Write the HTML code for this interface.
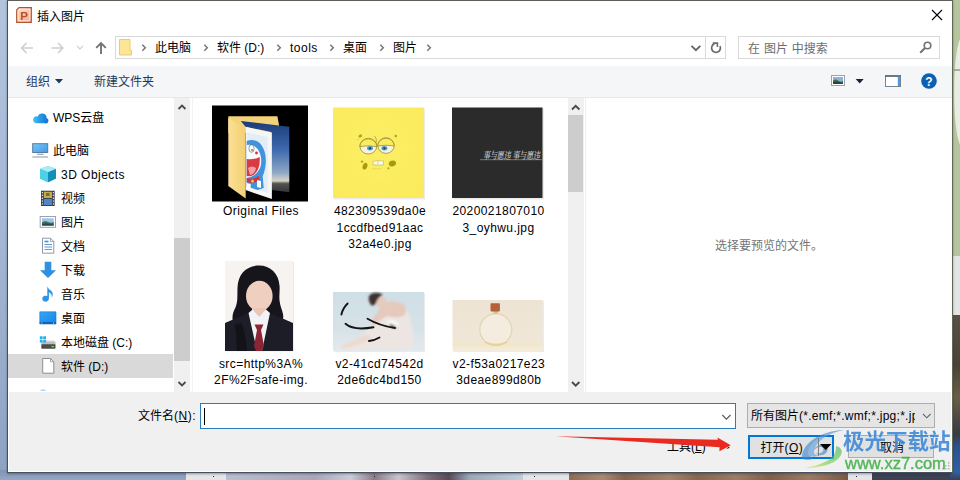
<!DOCTYPE html>
<html lang="zh-CN">
<head>
<meta charset="utf-8">
<title>插入图片</title>
<style>
*{box-sizing:border-box;margin:0;padding:0}
html,body{width:960px;height:480px;overflow:hidden}
body{position:relative;font-family:"Liberation Sans","Noto Sans CJK SC",sans-serif;font-size:12px;color:#000;background:#9fb2cf}
.abs{position:absolute}
#bgL{left:0;top:0;width:8px;height:480px;background:linear-gradient(#b3c4dd,#a3b6d3 50%,#8da2c2)}
#dlg{left:7px;top:0;width:946px;height:473px;background:#fff;border:1px solid #46505c;border-top-color:#5c6058;border-right-color:#5f6a55;box-shadow:0 1px 2px rgba(40,50,70,.45)}
#title{left:37px;top:8px;font-size:12px;line-height:16px}
#addr{left:115px;top:36px;width:591px;height:23px;border:1px solid #d9d9d9;background:#fff}
#refresh{left:705px;top:36px;width:21px;height:23px;border:1px solid #d9d9d9;background:#fff}
#search{left:738px;top:36px;width:202px;height:23px;border:1px solid #d9d9d9;background:#fff}
#tool{left:8px;top:66px;width:944px;height:32px;background:#f5f6f7;border-bottom:1px solid #e6e7e8}
.t{position:absolute;white-space:nowrap;line-height:16px;margin-top:1px}
.nav .t{font-size:12px;margin-top:1.500px}
#sel{left:8px;top:354px;width:165px;height:24px;background:#d9d9d9}
.sb{background:#f0f0f0}
.thumbbar{background:#cdcdcd}
#bottom{left:8px;top:392px;width:944px;height:80px;background:#f0f0f0;border:1px solid #fff;border-top:0}
#fname{left:200px;top:403px;width:535.500px;height:25.500px;border:1px solid #2a7dbd;background:#fff}
#filter{left:747px;top:403px;width:188px;height:25px;border:1px solid #adadad;background:#e5e5e5}
.btn{border:1px solid #adadad;background:#e1e1e1}
.cap{position:absolute;text-align:center;font-size:12px;line-height:16.7px;white-space:nowrap;letter-spacing:.42px}
</style>
</head>
<body>
<div id="bgL" class="abs"></div>
<svg class="abs" style="left:0;top:0" width="960" height="480" viewBox="0 0 960 480">
 <defs>
  <linearGradient id="bgb" x1="0" y1="0" x2="0" y2="1"><stop offset="0" stop-color="#7f93b4"/><stop offset="1" stop-color="#93a6c4"/></linearGradient>
  <linearGradient id="brn" x1="0" y1="0" x2="1" y2="0"><stop offset="0" stop-color="#8c6c56"/><stop offset=".12" stop-color="#a88a72"/><stop offset=".2" stop-color="#84644e"/><stop offset=".36" stop-color="#a3846c"/><stop offset=".46" stop-color="#86664f"/><stop offset=".6" stop-color="#9c7c64"/><stop offset=".72" stop-color="#7f5f4a"/><stop offset=".86" stop-color="#9a7a62"/><stop offset="1" stop-color="#7a5a46"/></linearGradient>
  <linearGradient id="mid1" x1="0" y1="0" x2="1" y2="0"><stop offset="0" stop-color="#b9bfd0"/><stop offset=".3" stop-color="#a9a6b8"/><stop offset=".42" stop-color="#c9cdd8"/><stop offset=".5" stop-color="#8a7c88"/><stop offset=".58" stop-color="#c8c4cc"/><stop offset=".68" stop-color="#7d6f7a"/><stop offset=".75" stop-color="#5a4a55"/><stop offset=".82" stop-color="#9aa8b8"/><stop offset="1" stop-color="#c3cedb"/></linearGradient>
  <linearGradient id="rdk" x1="0" y1="0" x2="0" y2="1"><stop offset="0" stop-color="#5a5048"/><stop offset=".3" stop-color="#4a4238"/><stop offset=".5" stop-color="#6a5c48"/><stop offset=".72" stop-color="#3a3a40"/><stop offset=".8" stop-color="#2a5290"/><stop offset=".95" stop-color="#2f5fa8"/><stop offset="1" stop-color="#3a4050"/></linearGradient>
 </defs>
 <rect x="0" y="470" width="186" height="10" fill="url(#bgb)"/>
 <rect x="186" y="470" width="40" height="10" fill="#e4e5e7"/>
 <rect x="226" y="470" width="297" height="10" fill="url(#mid1)"/>
 <rect x="523" y="470" width="46" height="10" fill="#e4e5e7"/>
 <rect x="569" y="470" width="279" height="10" fill="url(#brn)"/>
 <rect x="848" y="470" width="24" height="10" fill="#e4e5e7"/>
 <rect x="872" y="470" width="88" height="10" fill="#3c4252"/>
 <rect x="213" y="476" width="1" height="1" fill="#222"/><rect x="374" y="476" width="1" height="1" fill="#222"/><rect x="534" y="476" width="1" height="1" fill="#222"/><rect x="856" y="476" width="1" height="1" fill="#222"/>
 <rect x="950" y="0" width="10" height="258" fill="#b6c59d"/>
 <ellipse cx="963" cy="92" rx="9" ry="56" fill="#e9ece2"/>
 <path d="M954 70h6" stroke="#6a7060" stroke-width="1"/>
 <rect x="950" y="256" width="10" height="60" fill="#e3e4e4"/>
 <rect x="950" y="315" width="10" height="165" fill="url(#rdk)"/>
</svg>
<div id="dlg" class="abs"></div>

<!-- title bar -->
<svg class="abs" style="left:16px;top:7px" width="16" height="16" viewBox="0 0 16 16">
 <defs><linearGradient id="pp" x1="0" y1="0" x2="1" y2="1"><stop offset="0" stop-color="#fbe3d6"/><stop offset="1" stop-color="#f2a88c"/></linearGradient></defs>
 <path d="M3 .7h12.300v14.600H.7V3z" fill="url(#pp)" stroke="#b5532c" stroke-width="1.200"/>
 <path d="M3 2.200h10.800v11.600H2.200V3z" fill="none" stroke="#fdf1ea" stroke-width=".8"/>
 <text x="4.200" y="12.600" font-family="Liberation Sans,sans-serif" font-weight="bold" font-size="11.500" fill="#c14e14">P</text>
</svg>
<div id="title" class="t">插入图片</div>
<svg class="abs" style="left:931px;top:9px" width="12" height="12" viewBox="0 0 12 12"><path d="M1 1l10 10M11 1L1 11" stroke="#000" stroke-width="1.1" fill="none"/></svg>

<!-- nav arrows -->
<svg class="abs" style="left:20px;top:41px" width="16" height="14" viewBox="0 0 16 14"><path d="M13 7H2M6.500 2L1.700 7l4.800 5" stroke="#cfcfcf" stroke-width="1.700" fill="none"/></svg>
<svg class="abs" style="left:49px;top:41px" width="16" height="14" viewBox="0 0 16 14"><path d="M2.500 7h11M9 2l4.800 5L9 12" stroke="#cfcfcf" stroke-width="1.700" fill="none"/></svg>
<svg class="abs" style="left:76px;top:45px" width="8" height="5" viewBox="0 0 8 5"><path d="M1 .8l3 3 3-3" stroke="#cdcdcd" stroke-width="1.200" fill="none"/></svg>
<svg class="abs" style="left:94px;top:40px" width="14" height="16" viewBox="0 0 14 16"><path d="M7 14V3M2.200 7.800L7 3l4.800 4.800" stroke="#737373" stroke-width="1.900" fill="none"/></svg>

<div id="addr" class="abs"></div>
<div id="refresh" class="abs"></div>
<div id="search" class="abs"></div>
<!-- folder icon in address -->
<svg class="abs" style="left:119px;top:39px" width="14" height="17" viewBox="0 0 14 17"><path d="M.5 .5h10.500v11h1.500v4.500H.5z" fill="#fde595" stroke="#eccb6c" stroke-width="1"/></svg>
<div class="t" style="left:155px;top:39px">此电脑</div>
<div class="t" style="left:217px;top:39px">软件 (D:)</div>
<div class="t" style="left:290px;top:39px;letter-spacing:.5px">tools</div>
<div class="t" style="left:343px;top:39px">桌面</div>
<div class="t" style="left:393px;top:39px">图片</div>
<svg class="abs" style="left:0;top:0;pointer-events:none" width="960" height="60">
 <g stroke="#757575" stroke-width="1.500" fill="none">
  <path d="M142.3 44.700l3 3-3 3"/><path d="M204.3 44.700l3 3-3 3"/><path d="M277.3 44.700l3 3-3 3"/><path d="M330.3 44.700l3 3-3 3"/><path d="M380.3 44.700l3 3-3 3"/><path d="M427.3 44.700l3 3-3 3"/>
  <path d="M691.500 45.800l4.400 4.400 4.400-4.400" stroke="#666" stroke-width="1.900"/>
 </g>
 <path d="M720 46.200A4.400 4.400 0 1 1 714.400 43.900" stroke="#6a6a6a" stroke-width="1.700" fill="none"/>
 <path d="M712.800 43.100h4.600v4" stroke="#6a6a6a" stroke-width="1.600" fill="none"/>
 <circle cx="927.500" cy="45.500" r="3.300" stroke="#737373" stroke-width="1.600" fill="none"/>
 <path d="M925 48l-4.800 4.800" stroke="#737373" stroke-width="2"/>
</svg>
<div class="t" style="left:748px;top:39.500px;color:#6d6d6d;word-spacing:.6px">在 图片 中搜索</div>

<!-- toolbar -->
<div id="tool" class="abs"></div>
<div class="t" style="left:26px;top:73px;color:#1e395b">组织</div>
<svg class="abs" style="left:55px;top:79px" width="8" height="5"><path d="M0 0h8l-4 4.500z" fill="#1e395b"/></svg>
<div class="t" style="left:94px;top:73px;color:#1e395b">新建文件夹</div>
<svg class="abs" style="left:830px;top:72px" width="130" height="20" viewBox="0 0 130 20">
 <rect x="1.500" y="3.500" width="13" height="10" fill="#fff" stroke="#9aa3ad"/>
 <rect x="3" y="5" width="10" height="7" fill="#8db4d8"/><path d="M3 12V8.500q3-2 5 0t5 .5V12z" fill="#3f6a55"/><path d="M3 12v-2q4-1 10 1v1z" fill="#27433a"/>
 <path d="M25.700 7h8l-4 4.500z" fill="#1a2238"/>
 <rect x="55.500" y="4" width="15" height="10.500" fill="#fff" stroke="#77828f"/>
 <path d="M55 4h16" stroke="#5c6672" stroke-width="1.600"/>
 <rect x="67.800" y="4.500" width="2.400" height="9.500" fill="#4f97d8"/>
 <circle cx="99" cy="9" r="7.800" fill="#0d5fb4"/>
 <text x="99" y="13.500" text-anchor="middle" font-family="Liberation Sans,sans-serif" font-weight="bold" font-size="12" fill="#fff">?</text>
</svg>

<!-- nav pane -->
<div id="sel" class="abs"></div>
<div class="nav">
<div class="t" style="left:53px;top:108px">WPS云盘</div>
<div class="t" style="left:53px;top:141px">此电脑</div>
<div class="t" style="left:61px;top:165px;letter-spacing:.47px">3D Objects</div>
<div class="t" style="left:61px;top:189px">视频</div>
<div class="t" style="left:61px;top:213px">图片</div>
<div class="t" style="left:61px;top:237px">文档</div>
<div class="t" style="left:61px;top:261px">下载</div>
<div class="t" style="left:61px;top:285px">音乐</div>
<div class="t" style="left:61px;top:309px">桌面</div>
<div class="t" style="left:61px;top:333px">本地磁盘 (C:)</div>
<div class="t" style="left:61px;top:357px">软件 (D:)</div>
</div>
<!-- nav icons -->
<svg class="abs" style="left:28px;top:104px" width="40" height="287" viewBox="28 104 40 287">
 <defs>
  <linearGradient id="cl" x1="0" y1="0" x2="1" y2="0"><stop offset="0" stop-color="#45c6f2"/><stop offset=".5" stop-color="#2497e6"/><stop offset="1" stop-color="#1470d0"/></linearGradient>
  <linearGradient id="scr" x1="0" y1="0" x2="1" y2="1"><stop offset="0" stop-color="#7cc6f6"/><stop offset="1" stop-color="#3a9be8"/></linearGradient>
  <linearGradient id="dsk" x1="0" y1="0" x2="1" y2="1"><stop offset="0" stop-color="#35a6f6"/><stop offset="1" stop-color="#1585e6"/></linearGradient>
 </defs>
 <!-- cloud -->
 <path d="M36.500 123.300a3.500 3.500 0 1 1 1.200-6.800a4.600 4.600 0 0 1 8.900 1.700a2.600 2.600 0 0 1-1.900 5.100z" fill="url(#cl)"/>
 <!-- pc -->
 <rect x="32.700" y="143.700" width="15" height="8.800" fill="url(#scr)" stroke="#5b7a98" stroke-width="1"/>
 <path d="M37 154.300h6.500" stroke="#8aa2b8" stroke-width="1.200"/><path d="M32.300 157h15.700" stroke="#9aa9b8" stroke-width="1.200"/>
 <!-- 3d -->
 <path d="M48 166l8 3v9.500l-8 3.800-8-3.800v-9.500z" fill="#2fb4d8"/>
 <path d="M48 166l8 3-8 3.200-8-3.200z" fill="#a8ecf6"/>
 <path d="M48 172.200v10.100l8-3.800v-9.500z" fill="#1490b8"/>
 <path d="M40 169l8 3.200v10.100l-8-3.800z" fill="#4fd0e6"/>
 <!-- video -->
 <rect x="41" y="190.700" width="13.700" height="15.300" fill="#3f4150"/>
 <rect x="43.800" y="191.800" width="8.200" height="6.200" fill="#c9a94a"/><rect x="43.800" y="199" width="8.200" height="6" fill="#4f86c8"/>
 <path d="M42.400 192v13.500M53.400 192v13.500" stroke="#e9e9ee" stroke-width="1.100" stroke-dasharray="1.300 1.500"/>
 <rect x="46" y="193" width="3.500" height="3" fill="#5b7a3c"/>
 <!-- pictures -->
 <rect x="40.200" y="216.500" width="15.300" height="10.800" fill="#fff" stroke="#9aa3ad"/>
 <rect x="42" y="218.300" width="11.700" height="7.200" fill="#9cc4e6"/><path d="M42 225.500v-3q3-2 6-.5t5.700 0v3.500z" fill="#3f6a5a"/><path d="M42 225.500v-1.500q5-1 11.700 .5v1z" fill="#2a4a44"/>
 <!-- docs -->
 <path d="M42.500 238.200h8l3.300 3.300v11.700h-11.300z" fill="#fff" stroke="#8d98a5"/><path d="M50.500 238.200v3.300h3.300" fill="none" stroke="#8d98a5" stroke-width=".8"/>
 <path d="M44.500 241.500h4" stroke="#3f8fd6" stroke-width="1.600"/><path d="M44.500 244.500h7.500M44.500 247h7.500M44.500 249.500h7.500" stroke="#5a9bd8" stroke-width="1"/>
 <!-- download -->
 <path d="M44.700 261.800h6.600v8.400h4.700l-8 7.800-8-7.800h4.700z" fill="#2f8fe0"/>
 <!-- music -->
 <path d="M47.300 286.200c.6 2 2 3 3.600 4.400c2 2 2.600 4.400 .8 7.400c.6-3-.6-4.800-2.800-5.800v6.500a3.300 3 0 1 1-1.600-2.600z" fill="#2b94e8"/>
 <!-- desktop -->
 <rect x="39.800" y="311.800" width="16.200" height="12.200" fill="url(#dsk)"/><rect x="39.800" y="322" width="16.200" height="2" fill="#0f62b8"/><circle cx="41.800" cy="323" r=".6" fill="#fff"/><circle cx="53.500" cy="323" r=".6" fill="#fff"/><path d="M39.800 311.800h16.200v12.200h-16.200z" fill="none" stroke="#1372cc" stroke-width=".6"/>
 <!-- C drive -->
 <path d="M43 342l1-1.500h10l1.500 1.500z" fill="#d4d4d4"/><rect x="41.300" y="342" width="14.200" height="3" fill="#bdbdbd"/><rect x="41.300" y="344.300" width="14.200" height="4.400" rx=".8" fill="#4c4c4c"/><rect x="51.500" y="346" width="2.500" height="1.200" fill="#5fe85f"/>
 <rect x="39.800" y="336.300" width="2.800" height="2.800" fill="#21b0ec"/><rect x="43.200" y="336.300" width="2.800" height="2.800" fill="#21b0ec"/><rect x="39.800" y="339.700" width="2.800" height="2.800" fill="#21b0ec"/><rect x="43.200" y="339.700" width="2.800" height="2.800" fill="#21b0ec"/>
 <!-- D -->
 <path d="M42.700 358.500h7.800l3.300 3.300v11.400h-11.100z" fill="#fff" stroke="#8f8f8f"/><path d="M50.500 358.500v3.300h3.300" fill="none" stroke="#8f8f8f" stroke-width=".8"/>
 <path d="M40 391a3.200 2.200 0 0 1 6.200 0z" fill="#a9dcf0"/>
</svg>

<!-- nav scrollbar -->
<div class="abs sb" style="left:174px;top:98px;width:16px;height:294px"></div>
<div class="abs thumbbar" style="left:174px;top:238px;width:15.500px;height:123px"></div>
<svg class="abs" style="left:174px;top:98px" width="16" height="294"><path d="M4.500 11L8 7.500l3.500 3.500M4.500 284L8 287.500l3.500-3.500" stroke="#4a4a4a" stroke-width="1.800" fill="none"/></svg>

<div class="abs" style="left:191.500px;top:98px;width:1px;height:294px;background:#f3f3f3"></div>
<!-- file scrollbar -->
<div class="abs sb" style="left:568px;top:98px;width:15.500px;height:294px"></div>
<div class="abs thumbbar" style="left:568px;top:115px;width:15px;height:77px"></div>
<div class="abs" style="left:584.500px;top:98px;width:1px;height:294px;background:#eee"></div>
<svg class="abs" style="left:567px;top:98px" width="17" height="294"><path d="M5 11.500L8.700 7.800l3.700 3.700M5 284L8.700 287.700l3.700-3.700" stroke="#4a4a4a" stroke-width="1.900" fill="none"/></svg>

<!-- FILES -->
<div id="files">
<svg class="abs" style="left:190px;top:98px" width="377" height="292" viewBox="190 98 377 292">
 <defs>
  <linearGradient id="sky" x1="0" y1="0" x2="0" y2="1"><stop offset="0" stop-color="#1b3a78"/><stop offset=".4" stop-color="#3d69ad"/><stop offset=".72" stop-color="#8da6c6"/><stop offset=".84" stop-color="#d6d2c8"/><stop offset=".88" stop-color="#55534f"/><stop offset="1" stop-color="#33343a"/></linearGradient>
  <linearGradient id="fold" x1="0" y1="0" x2="1" y2="0"><stop offset="0" stop-color="#fbe096"/><stop offset="1" stop-color="#f3cf72"/></linearGradient>
  <radialGradient id="ybg" cx=".5" cy=".45" r=".7"><stop offset="0" stop-color="#fcee64"/><stop offset="1" stop-color="#fbeb5c"/></radialGradient>
  <linearGradient id="girlbg" x1="0" y1="0" x2="0" y2="1"><stop offset="0" stop-color="#cfdfe6"/><stop offset=".6" stop-color="#d6e2e8"/><stop offset="1" stop-color="#e3e9ec"/></linearGradient>
  <linearGradient id="botbg" x1="0" y1="0" x2="0" y2="1"><stop offset="0" stop-color="#ede3d3"/><stop offset=".8" stop-color="#f0e7d8"/><stop offset=".88" stop-color="#f3e6c8"/><stop offset=".94" stop-color="#f3ead9"/><stop offset="1" stop-color="#f3ebdc"/></linearGradient>
 <filter id="blur2" x="-5%" y="-5%" width="110%" height="110%"><feGaussianBlur stdDeviation=".45"/></filter>
 <filter id="blur1" x="-5%" y="-5%" width="110%" height="110%"><feGaussianBlur stdDeviation=".8"/></filter>
 </defs>
 <!-- folder thumb -->
 <rect x="212" y="105.500" width="96" height="96" fill="#000"/>
 <path d="M228.300 116.300h49.100l1.600 8.600v8h-50.700z" fill="#f3d379"/>
 <path d="M240.800 120.900l48.500 5.900v65.400l-18-2.200v-58l-25.600-5z" fill="url(#sky)"/>
 <path d="M245.700 126.800l26.200 6v66.300l-26.200-9z" fill="#f6f6f4"/>
 <path d="M246.700 132.500l21 4.500v56l-21-6.300z" fill="#e3edf7"/>
 <g filter="url(#blur2)">
 <path d="M246.700 141q8-3 14 3q6 8 5 20q-1 8-3 12l1 12l-6 2l-11-3.500z" fill="#3f93dc"/>
 <path d="M246.700 145q7-1 11 4q5 8 3 17q-3 10-14 12z" fill="#fcfcfc"/>
 <path d="M246.700 159q8 1 13-2q1 12-6 18q-4 2-7 1z" fill="#d93a42"/>
 <path d="M248 168q4-3 8 0q-1 6-6 7z" fill="#f2a0a8"/>
 <ellipse cx="251.500" cy="148.500" rx="2.600" ry="3.800" fill="#fff" stroke="#333" stroke-width=".5"/><circle cx="252" cy="150" r=".8" fill="#222"/>
 <circle cx="256.500" cy="153" r="1.400" fill="#d8323c"/>
 <path d="M246.700 178q6 2 12-2l1 4q-6 4-13 2z" fill="#d8323c"/><circle cx="252.500" cy="181" r="1.500" fill="#f0c838"/>
 <path d="M257 180l4 1v7l-4-1zM246.700 183l4 1v5l-4-1z" fill="#fcfcfc"/>
 </g>
 <path d="M228.300 118l17.400 10.800v69.800l-17.400-12.700z" fill="url(#fold)"/>
 <!-- yellow thumb -->
 <rect x="334" y="108.500" width="91" height="91" fill="#ddd" opacity=".6"/>
 <rect x="333" y="107.500" width="91" height="90.500" fill="url(#ybg)"/>
 <g filter="url(#blur2)">
  <ellipse cx="368.300" cy="146.200" rx="8.400" ry="7.800" fill="#f7f3e0" stroke="#8a8226" stroke-width=".7"/>
  <ellipse cx="386" cy="145.600" rx="8.200" ry="7.800" fill="#f7f3e0" stroke="#8a8226" stroke-width=".7"/>
  <path d="M359.900 146.600a8.400 7.800 0 0 1 16.800 0q-8.400-1.600-16.800 0z" fill="#fbec5c" stroke="#8a8226" stroke-width=".7"/>
  <path d="M377.800 146a8.200 7.800 0 0 1 16.400 0q-8.200-1.600-16.400 0z" fill="#fbec5c" stroke="#8a8226" stroke-width=".7"/>
  <path d="M374.500 136q3 3 1.500 7" stroke="#8a8226" stroke-width=".6" fill="none"/>
  <ellipse cx="370" cy="148.300" rx="2.900" ry="2.200" fill="#4d9acb"/><ellipse cx="384.400" cy="148.300" rx="2.900" ry="2.200" fill="#4d9acb"/>
  <ellipse cx="370" cy="148.300" rx="1.200" ry="1" fill="#1d3a5a"/><ellipse cx="384.400" cy="148.300" rx="1.200" ry="1" fill="#1d3a5a"/>
  <path d="M373 161.300q5-1.200 10.500-.3v3.800q-5 .8-10.500 0z" fill="#fbfbf2" stroke="#b0a23a" stroke-width=".5"/><path d="M378 161v4" stroke="#b0a23a" stroke-width=".5"/>
  <path d="M372 168.500q5 .8 9 0" stroke="#d5c43a" stroke-width=".5" fill="none"/>
  <ellipse cx="365" cy="166.200" rx="2.300" ry="3.400" transform="rotate(20 365 166.200)" fill="#a89a10"/><ellipse cx="392.400" cy="163.500" rx="3.700" ry="2.800" transform="rotate(-15 392.400 163.500)" fill="#a89a10"/>
  <ellipse cx="360.300" cy="136" rx="2" ry="1.500" transform="rotate(-25 360.300 136)" fill="#b5a618"/><circle cx="395.800" cy="136" r="1.300" fill="#b5a618"/><circle cx="362" cy="161.600" r="1.200" fill="#b5a618"/><circle cx="388.400" cy="168.300" r="1.100" fill="#b5a618"/><circle cx="358" cy="139.500" r=".6" fill="#c9b820"/>
 </g>
 <!-- dark thumb -->
 <rect x="453" y="108.500" width="91" height="91" fill="#ddd" opacity=".6"/>
 <rect x="452" y="107.500" width="90.500" height="90.500" fill="#2b2b2b"/>
 <text x="483" y="159" font-family="Noto Serif CJK SC,Liberation Serif,serif" font-size="10" font-style="italic" fill="#f0f0f0" textLength="57" lengthAdjust="spacingAndGlyphs">事与愿违 事与愿违</text>
 <path d="M480 159.700h62" stroke="#9a9a9a" stroke-width=".7"/>
 <!-- portrait -->
 <rect x="226" y="262" width="68" height="89.500" fill="#ddd" opacity=".6"/>
 <rect x="225" y="261" width="68" height="90" fill="#f7f3f1"/>
 <path d="M259 265.500c-12 0-21 8-21.500 22c-.3 9 .5 14-2 20c-2 4-4 8-2.500 14c1 5-1 9 0 14c1 5 0 10 1 15.500h24l4-22l4-8l10 3c6-1 8-4 7-10c-1-5-3-8-3.500-14c-.5-5 .5-9 0-14.500c-.8-12-9-20-20.500-20z" fill="#16151b"/>
 <ellipse cx="259.300" cy="296" rx="13.300" ry="15.200" fill="#efcfc0"/>
 <path d="M252 308h14v8l-7 6l-7-6z" fill="#ebc6b6"/>
 <path d="M225 323l23-10l11 14l11-14l23 10v28h-68z" fill="#1c1d27"/>
 <path d="M248.500 313l8.500 38h5l8-38l-4-3.500l-6.800 7.500l-6.700-7.500z" fill="#f3f3f6"/>
 <path d="M254.500 324.500h9l-2.500 5.500l3 16l-2 5h-6l-2-5l3-16z" fill="#8b2535"/>
 <path d="M234 325c3 6 2 14 3 26h10c-1-10-2-20-6-28z" fill="#131218"/>
 <!-- girl -->
 <rect x="334" y="293" width="91" height="59" fill="#ddd" opacity=".6"/>
 <rect x="333" y="292" width="91" height="59" fill="url(#girlbg)"/>
 <g filter="url(#blur1)">
 <path d="M337 348c8-4 18-8 26-13c4-5 7-10 11-15c3-6 8-11 14-13c8-3 15-2 19 3c4 7 5 15 6 23c1 7 0 12-3 15c-10 2-24 2-34 0c-12 2-28 3-39 0z" fill="#ece5e2"/>
 <path d="M340 347c8-5 18-8 26-13l6 4c-8 5-20 9-30 10z" fill="#ecd9d0"/>
 <path d="M385 303c7-3 16-1 20 3c2 4 1 8-2 10c-5 2-11 1-16 0c-6 3-11 7-15 11c-1-5 1-10 5-14c2-4 4-8 8-10z" fill="#e4c9bc"/>
 <path d="M375 300c2-3 8-4 11-2c1 4-1 8-4 10c-4 0-7-3-7-8z" fill="#e6cbbf"/>
 <path d="M369 296c3-4 10-4 14-1c-3 1-6 4-7 8c-1 2-3 3-5 2c-2-3-3-6-2-9z" fill="#40322f"/>
 <path d="M387 321c4-2 9-1 12 3c-1 4-6 5-10 3z" fill="#f7f7f4"/><path d="M389 324c3 0 6 2 8 4c-3 1-7 0-8-4z" fill="#4a5a45"/>
 </g>
 <g stroke="#141414" stroke-width="1.900" fill="none" stroke-linecap="round">
  <path d="M347.600 303.500q-5 5-6.200 11"/><path d="M345.500 323.800q8 7 28 3.500"/><path d="M367.500 318.700q12 7 27.500 9.300"/><path d="M369 341q6-.8 10.500-3.500"/>
 </g>
 <!-- bottle -->
 <rect x="453.500" y="301" width="90.500" height="51" fill="#ddd" opacity=".6"/>
 <rect x="452.500" y="300" width="90" height="51" fill="url(#botbg)"/>
 <g filter="url(#blur2)">
 <circle cx="495.800" cy="329.600" r="16" fill="#f3ecdf" stroke="#e0d4b8" stroke-width="1.200"/>
 <path d="M485 342q11 5.500 22 0" stroke="#ecd08c" stroke-width="1.800" fill="none"/>
 <rect x="493.500" y="311" width="4.500" height="3" fill="#d9c28a"/>
 <rect x="490.500" y="303.200" width="9.400" height="8.200" rx=".8" fill="#b3603a"/>
 </g>
</svg>
<div class="cap" style="left:201px;width:120px;top:203px">Original Files</div>
<div class="cap" style="left:320px;width:120px;top:203px">482309539da0e<br>1ccdfbed91aac<br>32a4e0.jpg</div>
<div class="cap" style="left:438.500px;width:120px;top:203px">2020021807010<br>3_oyhwu.jpg</div>
<div class="cap" style="left:201px;width:120px;top:355.700px">src=<span>http%3A%</span><br>2F%2Fsafe-img.</div>
<div class="cap" style="left:319.500px;width:120px;top:355.700px">v2-41cd74542d<br>2de6dc4bd150</div>
<div class="cap" style="left:438.800px;width:120px;top:355.700px">v2-f53a0217e23<br>3deae899d80b</div>
</div>


<div class="t" style="left:715px;top:236.500px;color:#757575">选择要预览的文件。</div>

<!-- bottom -->
<div id="bottom" class="abs"></div>
<div class="t" style="left:138px;top:407px">文件名<span style="letter-spacing:.5px">(<u>N</u>):</span></div>
<div id="fname" class="abs"></div>
<div class="abs" style="left:203.700px;top:407.500px;width:1.200px;height:17px;background:#000"></div>
<svg class="abs" style="left:721px;top:413.500px" width="11" height="7"><path d="M1.300 1l4.100 4.100 4.100-4.100" stroke="#5a5a5a" stroke-width="1.200" fill="none"/></svg>
<div id="filter" class="abs"></div>
<div class="t" style="left:751px;top:407px;width:164px;overflow:hidden">所有图片<span style="letter-spacing:.27px">(*.emf;*.wmf;*.jpg;*.jpeg;*.png)</span></div>
<svg class="abs" style="left:921.500px;top:413px" width="10" height="7"><path d="M1 1l3.800 3.800 3.800-3.800" stroke="#666" stroke-width="1.100" fill="none"/></svg>

<div class="t" style="left:667px;top:438px">工具(<u>L</u>)</div>
<svg class="abs" style="left:718px;top:444px" width="8" height="5"><path d="M0 0h8l-4 4.500z" fill="#000"/></svg>
<div class="abs btn" style="left:748px;top:435px;width:86px;height:24px;border:2px solid #0078d7"></div>
<div class="abs" style="left:818px;top:438px;width:1px;height:18px;background:#7f7f7f;z-index:3"></div>
<div class="t" style="left:760.500px;top:438.600px">打开<span style="letter-spacing:.4px">(<u>O</u>)</span></div>
<svg class="abs" style="left:820px;top:444px;z-index:3" width="12" height="7"><path d="M0 0h11.400l-5.700 6z" fill="#000"/></svg>
<div class="abs btn" style="left:848px;top:435px;width:86px;height:23px"></div>
<div class="t" style="left:880px;top:438.600px">取消</div>

<svg class="abs" style="left:940px;top:460px" width="12" height="12"><g fill="#b5b5b5"><rect x="8" y="2" width="1.500" height="1.500"/><rect x="8" y="5" width="1.500" height="1.500"/><rect x="8" y="8" width="1.500" height="1.500"/><rect x="5" y="5" width="1.500" height="1.500"/><rect x="5" y="8" width="1.500" height="1.500"/><rect x="2" y="8" width="1.500" height="1.500"/></g></svg>
<!-- red arrow -->
<svg class="abs" style="left:550px;top:426px" width="190" height="30" viewBox="550 425 190 30"><path d="M555 435.300L717.800 438.800l-.3-2.200L730.800 444.300l-11.400 5.900.2-4z" fill="#ea2a20"/><path d="M726 448l3-2.500.5 1.500z" fill="#3a1512"/></svg>

<!-- watermark -->
<svg class="abs" style="left:798px;top:426px;opacity:.62" width="50" height="46" viewBox="798 426 50 46">
 <defs>
  <linearGradient id="wg" x1="1" y1="0" x2="0" y2="1"><stop offset="0" stop-color="#3fb65a"/><stop offset=".6" stop-color="#7ccf4a"/><stop offset="1" stop-color="#e8e45a"/></linearGradient>
 </defs>
 <path d="M802 457c0-12 16-26 42-27c-18 3-30 12-33 22c-1 4 0 6 2 7c-6 2-11 1-11-2z" fill="#3d86d2"/>
 <path d="M808 452c2-10 14-18 28-20c-12 4-20 11-22 18c-1 4 2 6 6 5c-6 3-13 2-12-3z" fill="#5b9fe0"/>
 <path d="M813 452c1-5 6-8 11-7c4 1 5 5 2 8c-3 3-8 3-10 0c3 1 6 0 7-2c1-2 0-4-3-4c-3 0-6 2-7 5z" fill="#3d86d2"/>
 <path d="M836 446c5 1 7 5 5 9c-4 8-18 13-37 13c14-2 26-7 30-13c2-4 2-7 2-9z" fill="url(#wg)"/>
</svg>
<div class="t" style="left:843px;top:429px;font-size:21.500px;line-height:24px;font-weight:bold;color:#3a84d4;opacity:.86;text-shadow:0 0 1px #fff">极光下载站</div>
<div class="t" style="left:845px;top:453px;font-size:16.500px;line-height:18px;color:#45b24e;opacity:.92;-webkit-text-stroke:.4px #45b24e">www.xz7.com</div>
</body>
</html>
